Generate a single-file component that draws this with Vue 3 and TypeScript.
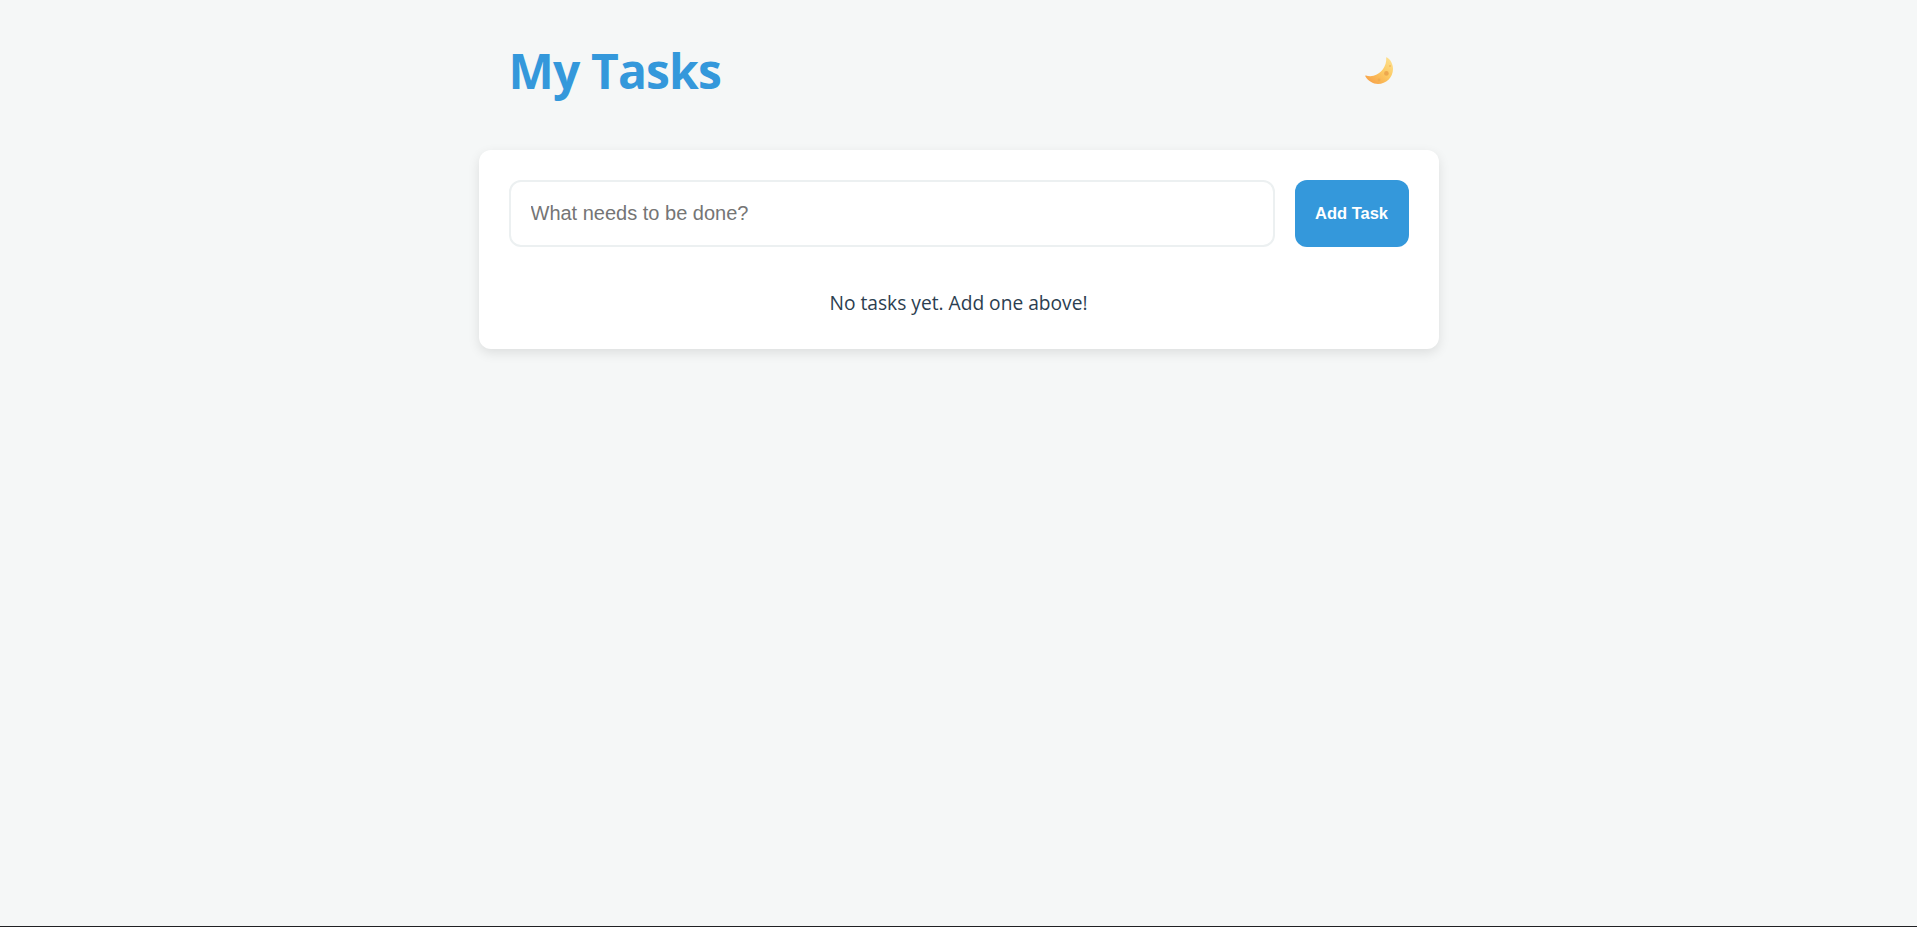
<script setup lang="ts">
import { ref } from 'vue'
const draft = ref<string>('')
</script>

<template>
  <div class="page">
    <main class="container">
      <header class="header">
        <h1 class="title">My Tasks</h1>
        <button class="theme" type="button" aria-label="Toggle theme">
          <svg width="28" height="28" viewBox="0 0 28 28">
            <defs>
              <linearGradient id="moon" x1="0.85" y1="0" x2="0.1" y2="0.9">
                <stop offset="0" stop-color="#fde08e" />
                <stop offset="0.5" stop-color="#fcc860" />
                <stop offset="1" stop-color="#f7a34a" />
              </linearGradient>
            </defs>
            <path d="M21.7 0.3C25.5 2.5 28 7 28 12C28 20.5 21 27 13 27C8 27 3 24 0.3 19.3C0 18.7 0.5 18.3 1 18.5C3 19.3 6 19.5 8.5 18.8C16 17 22 9 21.2 0.8C21.2 0.4 21.4 0.1 21.7 0.3Z" fill="url(#moon)" />
            <circle cx="21.4" cy="16.4" r="2.3" fill="#eda84e" />
            <circle cx="14" cy="23" r="1.4" fill="#f0ac50" />
            <circle cx="25" cy="9" r="1" fill="#f4b85c" />
          </svg>
        </button>
      </header>
      <section class="card">
        <form class="entry" @submit.prevent>
          <input v-model="draft" class="input" type="text" placeholder="What needs to be done?" />
          <button class="add" type="submit">Add Task</button>
        </form>
        <p class="empty">No tasks yet. Add one above!</p>
      </section>
    </main>
  </div>
</template>

<style>
html, body { margin: 0; background: #f5f7f7; }
</style>

<style scoped>
.page {
  box-sizing: border-box;
  min-height: 100vh;
  background: #f5f7f7;
  border-bottom: 1px solid #202124;
}
.container {
  width: 960px;
  margin: 0 auto;
}
.header {
  display: flex;
  align-items: center;
  justify-content: space-between;
  height: 150px;
  box-sizing: border-box;
  padding: 0 46px 8px 30px;
}
.title {
  margin: 0;
  font-family: "Open Sans", "Noto Sans", sans-serif;
  font-size: 48px;
  font-weight: 700;
  line-height: 64px;
  letter-spacing: -0.85px;
  color: #3498db;
}
.theme {
  display: flex;
  padding: 0;
  border: 0;
  background: none;
  cursor: pointer;
}
.card {
  box-sizing: border-box;
  height: 199px;
  padding: 30px;
  background: #fff;
  border-radius: 12px;
  box-shadow: 0 4px 12px rgba(0, 0, 0, 0.1);
}
.entry {
  display: flex;
  gap: 20px;
  height: 67px;
}
.input {
  flex: 1;
  min-width: 0;
  box-sizing: border-box;
  padding: 0 20px;
  border: 2px solid #ecf0f1;
  border-radius: 12px;
  outline: none;
  font-family: "Liberation Sans", Arial, sans-serif;
  font-size: 20px;
  color: #2c3e50;
  background: #fff;
}
.input::placeholder {
  color: #757575;
  opacity: 1;
}
.add {
  width: 114px;
  padding: 0 0 1px;
  border: 0;
  border-radius: 12px;
  background: #3498db;
  color: #fff;
  font-family: "Liberation Sans", Arial, sans-serif;
  font-size: 16.5px;
  font-weight: 700;
  cursor: pointer;
}
.empty {
  margin: 43px 0 0;
  text-align: center;
  font-family: "Open Sans", "Noto Sans", sans-serif;
  font-size: 19.2px;
  line-height: 26px;
  color: #2c3e50;
}
</style>
